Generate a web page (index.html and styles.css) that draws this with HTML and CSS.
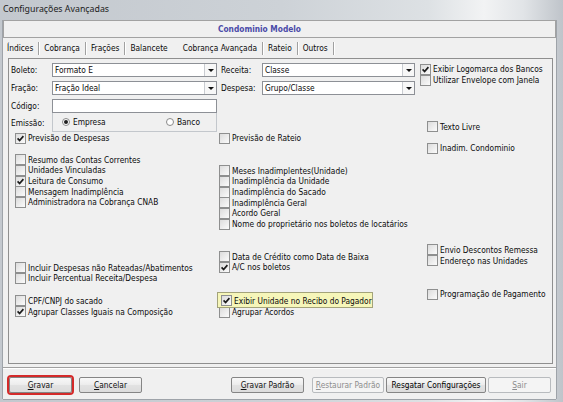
FILE: index.html
```html
<!DOCTYPE html>
<html lang="pt-BR">
<head>
<meta charset="utf-8">
<title>Configurações Avançadas</title>
<link rel="stylesheet" href="styles.css">
</head>
<body>
<div class="window">
  <div class="titlebar">Configurações Avançadas</div>
  <div class="client">
    <div class="header">Condominio Modelo</div>
    <div class="tabs">
      <span class="tab">Índices</span><span class="sep"></span>
      <span class="tab">Cobrança</span><span class="sep"></span>
      <span class="tab">Frações</span><span class="sep"></span>
      <span class="tab">Balancete</span><span class="sep hidden"></span>
      <span class="tab active">Cobrança Avançada</span><span class="sep"></span>
      <span class="tab">Rateio</span><span class="sep"></span>
      <span class="tab">Outros</span><span class="sep"></span>
    </div>
    <div class="sheet">
      <div class="col col1">
        <div class="frow"><span class="flabel">Boleto:</span><div class="combo"><span class="ctext">Formato E</span><span class="dd"></span></div></div>
        <div class="frow"><span class="flabel">Fração:</span><div class="combo"><span class="ctext">Fração Ideal</span><span class="dd"></span></div></div>
        <div class="frow tight"><span class="flabel">Código:</span><div class="edit"></div></div>
        <div class="frow radio-row"><span class="flabel">Emissão:</span>
          <div class="rgroup"><span class="radio on"><i></i>Empresa</span><span class="radio"><i></i>Banco</span></div>
        </div>
        <div class="list l1">
          <div class="cb"><span class="box"><svg viewBox="0 0 9 9"><path d="M1.6 4.4 L3.6 6.5 L7.4 2.1"/></svg></span>Previsão de Despesas</div>
          <div class="cb m-resumo"><span class="box"></span>Resumo das Contas Correntes</div>
          <div class="cb"><span class="box"></span>Unidades Vinculadas</div>
          <div class="cb"><span class="box"><svg viewBox="0 0 9 9"><path d="M1.6 4.4 L3.6 6.5 L7.4 2.1"/></svg></span>Leitura de Consumo</div>
          <div class="cb"><span class="box"></span>Mensagem Inadimplência</div>
          <div class="cb"><span class="box"></span>Administradora na Cobrança CNAB</div>
          <div class="cb m-incluir"><span class="box"></span>Incluir Despesas não Rateadas/Abatimentos</div>
          <div class="cb"><span class="box"></span>Incluir Percentual Receita/Despesa</div>
          <div class="cb m-cpf"><span class="box"></span>CPF/CNPJ do sacado</div>
          <div class="cb"><span class="box"><svg viewBox="0 0 9 9"><path d="M1.6 4.4 L3.6 6.5 L7.4 2.1"/></svg></span>Agrupar Classes Iguais na Composição</div>
        </div>
      </div>
      <div class="col col2">
        <div class="frow"><span class="flabel">Receita:</span><div class="combo"><span class="ctext">Classe</span><span class="dd"></span></div></div>
        <div class="frow"><span class="flabel">Despesa:</span><div class="combo"><span class="ctext">Grupo/Classe</span><span class="dd"></span></div></div>
        <div class="list l2">
          <div class="cb"><span class="box"></span>Previsão de Rateio</div>
          <div class="cb m-meses"><span class="box"></span>Meses Inadimplentes(Unidade)</div>
          <div class="cb"><span class="box"></span>Inadimplência da Unidade</div>
          <div class="cb"><span class="box"></span>Inadimplência do Sacado</div>
          <div class="cb"><span class="box"></span>Inadimplência Geral</div>
          <div class="cb"><span class="box"></span>Acordo Geral</div>
          <div class="cb"><span class="box"></span>Nome do proprietário nos boletos de locatários</div>
          <div class="cb m-data"><span class="box"></span>Data de Crédito como Data de Baixa</div>
          <div class="cb"><span class="box"><svg viewBox="0 0 9 9"><path d="M1.6 4.4 L3.6 6.5 L7.4 2.1"/></svg></span>A/C nos boletos</div>
          <div class="cb hl"><span class="box"><svg viewBox="0 0 9 9"><path d="M1.6 4.4 L3.6 6.5 L7.4 2.1"/></svg></span>Exibir Unidade no Recibo do Pagador</div>
          <div class="cb"><span class="box"></span>Agrupar Acordos</div>
        </div>
      </div>
      <div class="col col3">
        <div class="cb"><span class="box"><svg viewBox="0 0 9 9"><path d="M1.6 4.4 L3.6 6.5 L7.4 2.1"/></svg></span>Exibir Logomarca dos Bancos</div>
        <div class="cb"><span class="box"></span>Utilizar Envelope com Janela</div>
        <div class="cb ind m-texto"><span class="box"></span>Texto Livre</div>
        <div class="cb ind m-inadim"><span class="box"></span>Inadim. Condominio</div>
        <div class="cb ind m-envio"><span class="box"></span>Envio Descontos Remessa</div>
        <div class="cb ind"><span class="box"></span>Endereço nas Unidades</div>
        <div class="cb ind m-prog"><span class="box"></span>Programação de Pagamento</div>
      </div>
    </div>
    <div class="bottom">
      <button class="btn b-gravar focus"><u>G</u>ravar</button>
      <button class="btn b-cancelar"><u>C</u>ancelar</button>
      <button class="btn b-padrao"><u>G</u>ravar Padrão</button>
      <button class="btn b-restaurar disabled"><u>R</u>estaurar Padrão</button>
      <button class="btn b-resgatar">Resgatar Configurações</button>
      <button class="btn b-sair disabled"><u>S</u>air</button>
    </div>
  </div>
</div>
</body>
</html>
```
FILE: styles.css
```css
* { box-sizing: border-box; }
html, body { margin: 0; padding: 0; }
body {
  width: 563px; height: 402px; overflow: hidden;
  font-family: "DejaVu Sans Condensed", "DejaVu Sans", sans-serif;
  font-stretch: condensed;
  font-size: 8.3px;
  color: #0a0a0a;
  background: #c5cad0;
}
.window {
  width: 563px; height: 402px;
  display: flex; flex-direction: column;
  background: linear-gradient(90deg, #c3c8ce 0%, #cdd2d7 50%, #dde1e4 76%, #f2f3f4 86%, #e1e4e7 93%, #bfc4ca 100%);
}
.titlebar {
  flex: none; height: 20px;
  padding: 3px 0 0 3px;
  font-family: "Noto Sans", "Open Sans", sans-serif;
  font-stretch: normal;
  font-size: 8.8px; line-height: 12px;
  color: #1b1b1b;
}
.client {
  flex: none; height: 379px;
  margin: 0 7px 0 3px;
  background: #f0f0f0;
  display: flex; flex-direction: column;
  box-shadow: -1px 0 0 #9ea3a9, 1px 0 0 #9ea3a9, 0 1px 0 #9ea3a9;
}
.header {
  flex: none; height: 18px;
  border: 1px solid #a2a2a2;
  line-height: 16px;
  text-align: center;
  padding-right: 40px;
  font-weight: bold;
  color: #4a4aa8;
}
.tabs {
  flex: none; height: 20px;
  display: flex; align-items: center;
  padding-left: 4px;
}
.tab { white-space: nowrap; }
.sep {
  width: 2px; height: 13px;
  border-left: 1px solid #a0a0a0; border-right: 1px solid #fff;
  margin: 0 4px 0 5px;
}
.sep.hidden { visibility: hidden; margin: 0 6px 0 7px; }
.sheet {
  flex: none; height: 306px;
  margin: 0 3px 0 5px;
  border: 1px solid #8f8f8f;
  display: flex;
}
.col { display: flex; flex-direction: column; }
.col1 { width: 208px; padding-top: 4px; }
.col2 { width: 200px; padding-top: 4px; }
.col3 { width: 135px; padding-top: 5px; padding-left: 3px; }

.frow { display: flex; align-items: center; height: 14px; margin-bottom: 4px; }
.frow.tight { margin-bottom: 0; }
.frow.radio-row { height: 19px; margin-bottom: 0; }
.flabel { flex: none; width: 43px; padding-left: 2px; white-space: nowrap; }
.col2 .flabel { width: 45px; padding-left: 4px; }
.combo {
  flex: none; display: flex;
  width: 165px; height: 14px;
  border: 1px solid #8d9096;
  background: #fff;
}
.col2 .combo { width: 153px; }
.ctext { flex: 1; padding-left: 2px; line-height: 12px; white-space: nowrap; }
.dd {
  flex: none; width: 12px; height: 12px;
  border-left: 1px solid #c9ccd1;
  background: #f7f7f7;
  display: flex; align-items: center; justify-content: center;
}
.dd::after {
  content: "";
  border-left: 3px solid transparent; border-right: 3px solid transparent;
  border-top: 3px solid #111;
}
.edit {
  flex: none; width: 165px; height: 14px;
  border: 1px solid #8d9096;
  background: #fff;
}
.rgroup {
  flex: none; width: 165px; height: 19px;
  border: 1px solid #c3c7cc; border-top: none;
  display: flex; align-items: center; justify-content: space-between;
  padding: 0 16px 0 9px;
}
.radio { display: flex; align-items: center; }
.radio i {
  width: 8px; height: 8px; border-radius: 50%;
  border: 1px solid #8a8a8a; background: #fff;
  margin-right: 3px;
  display: flex; align-items: center; justify-content: center;
}
.radio.on i::after {
  content: ""; width: 4px; height: 4px; border-radius: 50%;
  background: #1e1e1e;
}

.list { display: flex; flex-direction: column; }
.l1 { padding-left: 6px; margin-top: 1px; }
.l2 { padding-left: 2px; margin-top: 34px; }
.cb {
  display: flex; align-items: center;
  height: 10.7px; white-space: nowrap;
}
.box {
  flex: none; width: 11px; height: 11px;
  border: 1px solid #8e8f8f;
  background: linear-gradient(135deg, #dcdcdc, #fbfbfb);
  margin-right: 2px;
  display: flex; align-items: center; justify-content: center;
}
.box svg { width: 9px; height: 9px; display: block; }
.box path { fill: none; stroke: #1c1c1c; stroke-width: 1.7; }

.ind { margin-left: 7px; }
.m-resumo { margin-top: 10.7px; }
.m-incluir { margin-top: 54.45px; }
.m-cpf { margin-top: 11.9px; }
.m-meses { margin-top: 21.65px; }
.m-data { margin-top: 21.8px; }
.m-texto { margin-top: 35.95px; }
.m-inadim { margin-top: 11px; }
.m-envio { margin-top: 90.95px; }
.m-prog { margin-top: 22.95px; }

.cb.hl {
  position: relative; z-index: 1;
  width: 156px; height: 16px;
  margin: 19.25px 0 -0.95px -2px;
  padding: 2px 0 0 3px;
  background: #f6f6b9;
  border: 1px solid #a3a37a;
}

.bottom {
  flex: none;
  margin-top: 3px;
  border-top: 1px solid #a0a0a0;
  box-shadow: inset 0 1px 0 #fff;
  padding-top: 9px;
  display: flex;
}
.btn {
  flex: none;
  height: 16px; width: 63px;
  border: 1px solid #858585; border-radius: 2px;
  background: linear-gradient(#f8f8f8, #ececec 50%, #e2e2e2 51%, #dcdcdc);
  font: inherit; font-stretch: condensed;
  color: #111;
  padding: 0; line-height: 14px; text-align: center;
  white-space: nowrap;
}
.btn.disabled {
  border-color: #b8bbbe;
  background: #f4f4f4;
  color: #8d8d8d;
}
.btn.focus { outline: 2px solid #d42a2a; outline-offset: 0; }
.b-gravar { margin-left: 6px; }
.b-cancelar { margin-left: 7px; }
.b-padrao { margin-left: 89px; width: 73px; }
.b-restaurar { margin-left: 8px; width: 72px; }
.b-resgatar { margin-left: 2px; width: 100px; color: #000; }
.b-sair { margin-left: 2px; }
```
